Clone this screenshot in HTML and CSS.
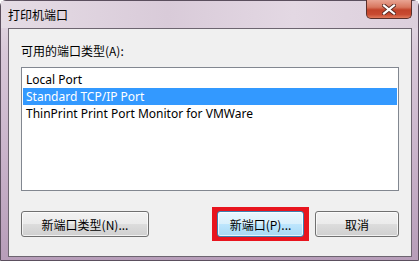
FILE: index.html
```html
<!DOCTYPE html>
<html>
<head>
<meta charset="utf-8">
<link rel="stylesheet" href="styles.css">
</head>
<body>
<div class="window">
  <div class="titlebar">
    <span class="title">打印机端口</span>
    <div class="close">
      <svg width="14" height="11" viewBox="0 0 14 11">
        <path d="M2 1.5 L12 9.5 M12 1.5 L2 9.5" stroke="#5a2a22" stroke-width="4" stroke-linecap="square"/>
        <path d="M2 1.5 L12 9.5 M12 1.5 L2 9.5" stroke="#ffffff" stroke-width="2.2" stroke-linecap="square"/>
      </svg>
    </div>
  </div>
  <div class="client">
    <div class="label">可用的端口类型(A):</div>
    <div class="listbox">
      <div class="item">Local Port</div>
      <div class="item selected">Standard TCP/IP Port</div>
      <div class="item">ThinPrint Print Port Monitor for VMWare</div>
    </div>
    <div class="buttons">
      <button class="btn btn-type">新端口类型(N)...</button>
      <div class="spacer"></div>
      <div class="highlight"><button class="btn btn-new">新端口(P)...</button></div>
      <button class="btn btn-cancel">取消</button>
    </div>
  </div>
</div>
</body>
</html>
```
FILE: styles.css
```css
* { box-sizing: border-box; }
html, body { margin: 0; padding: 0; }
body { width: 419px; height: 261px; overflow: hidden; background: #ffffff; }
.window {
  width: 419px;
  height: 261px;
  display: flex;
  flex-direction: column;
  background: linear-gradient(180deg, #e6dde6 0%, #d8c8d8 20%, #c9b3ca 60%, #b79db9 100%);
  border: 1px solid #5b4f5e;
  border-radius: 6px 6px 0 0;
  font-family: "Noto Sans CJK SC", sans-serif;
  font-size: 12px;
}
.titlebar {
  height: 27px;
  display: flex;
  align-items: flex-start;
  justify-content: space-between;
  padding-left: 7px;
  background: linear-gradient(90deg, #e5dce5 0%, #d9cbd9 40%, #e3d8e3 70%, #dccfdc 100%);
}
.title {
  margin-top: 6px;
  color: #000;
  font-size: 12px;
  line-height: 16px;
}
.close {
  width: 46px;
  height: 19px;
  margin-right: 6px;
  margin-top: -1px;
  border: 1px solid #5a2f2a;
  border-top: none;
  border-radius: 0 0 5px 5px;
  background: linear-gradient(180deg, #e9a493 0%, #d8775f 40%, #c2432a 55%, #c84a30 80%, #e07a5c 100%);
  display: flex;
  align-items: center;
  justify-content: center;
}
.client {
  flex: 1;
  margin: 0 6px 3px 7px;
  border: 1px solid #6d6570;
  background: #f0f0f0;
  padding: 14px 12px 0 12px;
  display: flex;
  flex-direction: column;
}
.label {
  line-height: 16px;
  height: 16px;
  color: #000;
}
.listbox {
  margin-top: 8px;
  height: 124px;
  background: #fff;
  border: 1px solid #828790;
  padding: 3px 1px 1px 1px;
  font-family: "Noto Sans", "DejaVu Sans", sans-serif;
}
.item {
  height: 17px;
  line-height: 17px;
  padding-left: 3px;
  color: #000;
  font-size: 12px;
}
.item.selected {
  background: #3399ff;
  color: #fff;
}
.buttons {
  margin-top: 16px;
  display: flex;
  align-items: center;
}
.btn {
  height: 26px;
  border: 1px solid #707070;
  border-radius: 3px;
  background: linear-gradient(180deg, #f2f2f2 0%, #ebebeb 49%, #dddddd 50%, #cfcfcf 100%);
  font-family: "Noto Sans CJK SC", sans-serif;
  font-size: 12px;
  color: #000;
  padding: 0;
  box-shadow: inset 0 0 0 1px rgba(255,255,255,0.7);
}
.btn-type { width: 128px; }
.spacer { flex: 1; }
.highlight {
  padding: 4px 5px;
  background: #e8141e;
  margin-right: 6px;
}
.btn-new {
  display: block;
  width: 87px;
  border-color: #3c7fb1;
  background: linear-gradient(180deg, #eaf6fd 0%, #d9f0fc 49%, #bee6fd 50%, #a7d9f5 100%);
}
.btn-cancel { width: 84px; }
```
